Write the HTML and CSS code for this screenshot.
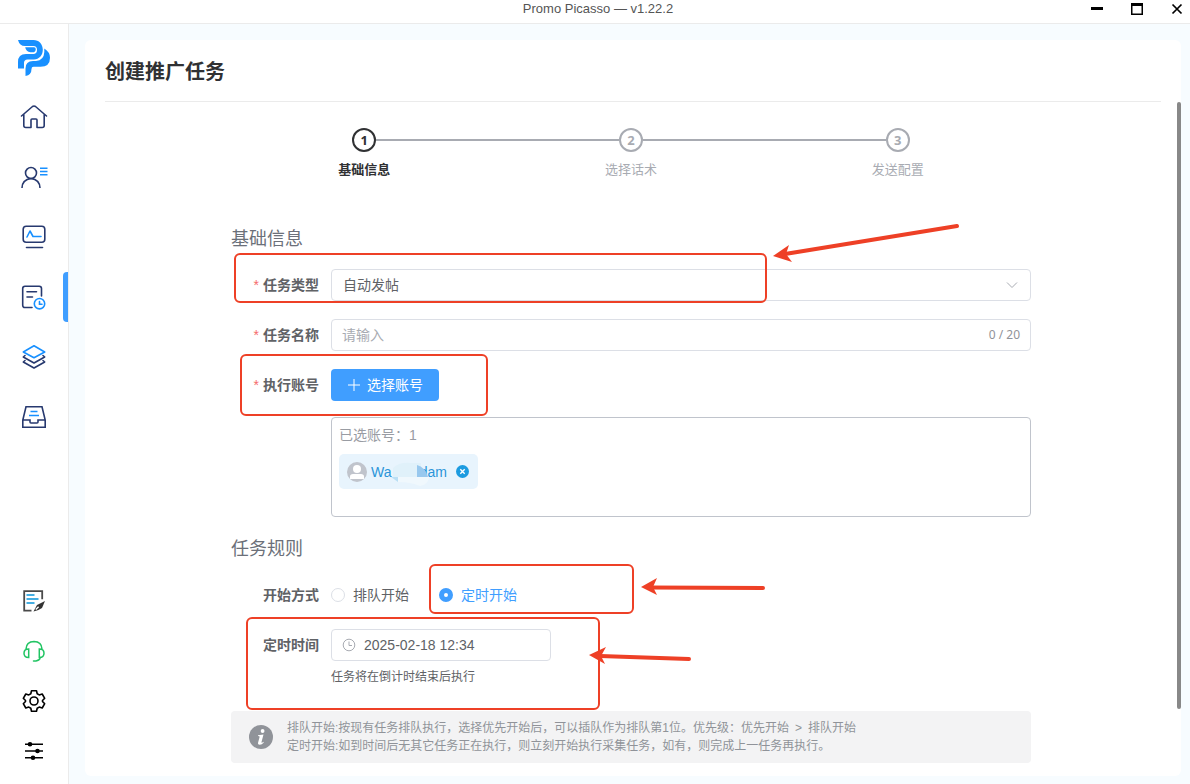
FILE: index.html
```html
<!DOCTYPE html>
<html lang="zh-CN">
<head>
<meta charset="utf-8">
<title>Promo Picasso — v1.22.2</title>
<link rel="stylesheet" href="styles.css">
</head>
<body>
<header class="titlebar">
  <span class="titlebar-text">Promo Picasso — v1.22.2</span>
  <div class="window-controls">
    <button type="button" aria-label="最小化"><svg width="12" height="12" viewBox="0 0 12 12"><path d="M0 5.5h12" stroke="#000" stroke-width="3"/></svg></button>
    <button type="button" aria-label="最大化"><svg width="12" height="12" viewBox="0 0 12 12"><path d="M.7 0v12M11.3 0v12M0 11.3h12" stroke="#000" stroke-width="1.6"/><path d="M0 1.5h12" stroke="#000" stroke-width="3"/></svg></button>
    <button type="button" aria-label="关闭"><svg width="12" height="12" viewBox="0 0 12 12"><path d="M1.5 1.5l9 9M10.5 1.5l-9 9" stroke="#000" stroke-width="1.7"/></svg></button>
  </div>
</header>
<div class="shell">
  <nav class="sidebar">
    <svg class="logo" width="32" height="36" viewBox="0 0 32 36" fill="#1890ff"><path d="M0 0h15.500C21 0 24.800 4.200 24.800 9.800S21 19.500 16 19.500H9.500Q6 19.500 6 23v5.500H0V22q0-8 8-8h8q3-.500 3-4.200T15.500 6H7Q1.500 6 0 0z"/><path d="M7.200 7.300H16q1.800 0 1.800 2T16 12.200h-3.500Q8 12 7.200 7.300zM26.300 8.500q5.700 3.500 5.700 9.300 0 9-9.500 9H15.500q-2 0-2 2.200 0 6-6 7V28.500Q7.500 21 15 21h3q8-.800 8.300-9z"/></svg>
    <a class="nav-item" href="#" aria-label="首页"><svg width="28" height="28" viewBox="0 0 28 28" fill="none" stroke="#27396f" stroke-width="1.600" stroke-linejoin="round" stroke-linecap="round"><path d="M1.500 13L12.500 3.500q1.500-1 3 0L26.500 13M3.800 11.500v11q0 2 2 2H11v-7.500q0-1 1-1h4q1 0 1 1v7.500h5.200q2 0 2-2v-11"/></svg></a>
    <a class="nav-item" href="#" aria-label="账号"><svg width="28" height="28" viewBox="0 0 28 28" fill="none" stroke="#27396f" stroke-width="1.600"><circle cx="11" cy="10" r="5.500"/><path d="M2 25q.3-8.500 9-9.500 8.700 1 9 9.500"/><path d="M20 5.300h7.500M20 8.500h7.500M20 11.700h7.500" stroke="#1890ff" stroke-width="1.400"/></svg></a>
    <a class="nav-item" href="#" aria-label="监控"><svg width="28" height="28" viewBox="0 0 28 28" fill="none" stroke="#27396f" stroke-width="1.600" stroke-linecap="round" stroke-linejoin="round"><rect x="3.200" y="3.200" width="21.600" height="16" rx="3"/><path d="M6.500 24.500h16"/><path d="M7 14l3-6 3 5.500h8" stroke="#1890ff"/></svg></a>
    <a class="nav-item nav-item--active" href="#" aria-label="任务"><svg width="28" height="28" viewBox="0 0 28 28" fill="none" stroke="#27396f" stroke-width="1.600" stroke-linecap="round"><path d="M12 24.500H5q-2.300 0-2.300-2.300V5.500Q2.700 3.200 5 3.200h14.200q2.300 0 2.300 2.300V13M7 8.700h9.500M7 14h5.500"/><circle cx="19.500" cy="20.700" r="5.200" stroke="#1890ff"/><path d="M19.500 18.500v2.700H22" stroke="#1890ff"/></svg></a>
    <a class="nav-item" href="#" aria-label="素材"><svg width="28" height="28" viewBox="0 0 28 28" fill="none" stroke="#27396f" stroke-width="1.600" stroke-linejoin="round" stroke-linecap="round"><path d="M5 12.500l-1.700 1.500L14 20l10.700-6-1.700-1.500M5 17.500L3.300 19 14 25l10.700-6-1.700-1.500"/><path d="M14 2.800L24.700 9 14 14.800 3.300 9z" stroke="#1890ff"/></svg></a>
    <a class="nav-item" href="#" aria-label="收件箱"><svg width="28" height="28" viewBox="0 0 28 28" fill="none" stroke="#27396f" stroke-width="1.600"><path d="M6 3.700h16L25.200 17v7.300H2.800V17zM2.800 17H10v2q0 1 1 1h6q1 0 1-1v-2h7.200"/><path d="M10.500 8.500h7M9 12.500h10" stroke="#1890ff"/></svg></a>
    <div class="nav-tools">
      <a class="tool-item" href="#" aria-label="日志"><svg width="24" height="24" viewBox="0 0 24 24" fill="none"><path d="M9.500 21.600H2.200V2.200h18v8" stroke="#4a4a4a" stroke-width="1.800"/><path d="M4.500 6h8M4.500 10h12M4.500 14h8" stroke="#45aee2" stroke-width="1.800"/><path d="M11.500 22.500l3.500-6.500 8-4-3 7q-3 2-8.500 3.500z" fill="#333"/><path d="M13.800 20.500l2.800-2.800" stroke="#fff" stroke-width="1.500"/></svg></a>
      <a class="tool-item" href="#" aria-label="客服"><svg width="24" height="24" viewBox="0 0 24 24" fill="none" stroke="#21c463" stroke-width="1.500" stroke-linecap="round"><path d="M4 10q.3-7.300 8-7.500 7.700.200 8 7.500M6.700 10v8.500Q2 18.500 2 14.200 2 10 6.700 10zM17.300 10v8.500q4.700 0 4.700-4.300 0-4.200-4.700-4.200zM18.500 18.500q-1 3-4.500 3.500h-2.500"/></svg></a>
      <a class="tool-item" href="#" aria-label="设置"><svg width="24" height="24" viewBox="0 0 24 24" fill="none" stroke="#000" stroke-width="1.600" stroke-linejoin="round"><path d="M9.500 1.800h5l.7 3 2 1.100 3-.900 2.500 4.300L20.500 11.500v1l2.200 2.200-2.500 4.300-3-.900-2 1.100-.7 3h-5l-.7-3-2-1.100-3 .900-2.500-4.300 2.200-2.200v-1L1.300 9.300 3.800 5l3 .900 2-1.100z"/><circle cx="12" cy="12" r="4"/></svg></a>
      <a class="tool-item" href="#" aria-label="偏好"><svg width="24" height="24" viewBox="0 0 24 24" stroke="#000" stroke-width="1.600"><path d="M3 5.200h18M3 12h18M3 18.800h18"/><circle cx="8" cy="5.200" r="1.500"/><circle cx="15.500" cy="12" r="1.500"/><circle cx="11" cy="18.800" r="1.500"/></svg></a>
    </div>
  </nav>
  <main class="main">
    <section class="card">
      <h1 class="card-title">创建推广任务</h1>
      <div class="scroll-area">
        <div class="content">
          <ol class="steps">
            <li class="step step--active"><span class="step-num">1</span><span class="step-label">基础信息</span></li>
            <li class="step"><span class="step-num">2</span><span class="step-label">选择话术</span></li>
            <li class="step"><span class="step-num">3</span><span class="step-label">发送配置</span></li>
          </ol>
          <form class="form">
            <h2 class="section-title">基础信息</h2>
            <div class="row">
              <label class="label label--required" for="type">任务类型</label>
              <div class="select-wrap">
                <select class="field" id="type"><option>自动发帖</option></select>
                <svg class="chevron" width="12" height="12" viewBox="0 0 12 12" fill="none" stroke="#a8abb2"><path d="M1 3.500l5 5 5-5"/></svg>
              </div>
            </div>
            <div class="row">
              <label class="label label--required" for="name">任务名称</label>
              <div class="field input-box"><input class="input" id="name" type="text" maxlength="20" placeholder="请输入"><span class="counter">0 / 20</span></div>
            </div>
            <div class="row">
              <label class="label label--required" for="pick">执行账号</label>
              <button class="primary" id="pick" type="button"><svg width="14" height="14" viewBox="0 0 14 14" stroke="#fff"><path d="M1 7h12M7 1v12"/></svg>选择账号</button>
            </div>
            <div class="accounts">
              <div class="accounts-count">已选账号：1</div>
              <div class="tag">
                <svg width="20" height="20" viewBox="0 0 20 20"><circle cx="10" cy="10" r="10" fill="#c0c4cc"/><circle cx="10" cy="7" r="4" fill="#fff"/><path d="M3 17v-2.500Q3 12 6 12h8q3 0 3 2.500V17z" fill="#fff"/></svg>
                <span class="tag-name"><span>Wa</span><span>dam</span><svg class="smudge" width="46" height="26" viewBox="0 0 46 26"><path d="M2 6Q8 0 20 1h10v14H2z" fill="#e0f1fa"/><path d="M26 3q8 2 11 12H26z" fill="#98c8ee"/><path d="M0 15h7v5z" fill="#b9dff5"/><path d="M7 15h31q-1 8-9 9-9-4-22-4z" fill="#f0f8fd"/></svg></span>
                <button class="tag-close" type="button" aria-label="移除"><svg width="13" height="13" viewBox="0 0 13 13"><circle cx="6.500" cy="6.500" r="6.500" fill="#1c9be0"/><path d="M4.300 4.300l4.400 4.400M8.700 4.300L4.300 8.700" stroke="#fff" stroke-width="1.400"/></svg></button>
              </div>
            </div>
            <h2 class="section-title section-title--rules">任务规则</h2>
            <div class="row" role="radiogroup" aria-labelledby="mode">
              <span class="label" id="mode">开始方式</span>
              <label class="radio"><input type="radio" name="mode">排队开始</label>
              <label class="radio"><input type="radio" name="mode" checked>定时开始</label>
            </div>
            <div class="row">
              <label class="label" for="time">定时时间</label>
              <div class="field input-box input-box--date"><svg width="14" height="14" viewBox="0 0 14 14" fill="none" stroke="#a8abb2"><circle cx="7" cy="7" r="5.800"/><path d="M7 3.500V7.500h3"/></svg><input class="input" id="time" type="text" value="2025-02-18 12:34"></div>
            </div>
            <p class="hint">任务将在倒计时结束后执行</p>
            <div class="notice">
              <svg width="24" height="24" viewBox="0 0 24 24"><circle cx="12" cy="12" r="12" fill="#909399"/><circle cx="13.600" cy="6" r="1.900" fill="#fff"/><path d="M9 10.200l5.500-.700-2 7.500q-.2 1 .600.700l1.200-.900.500.600q-2 2.300-4 2.300-2.200 0-1.700-2.200l1.500-5.500q.3-1-1.600-1z" fill="#fff"/></svg>
              <p>排队开始:按现有任务排队执行，选择优先开始后，可以插队作为排队第1位。优先级：优先开始&ensp;&gt;&ensp;排队开始<br>定时开始:如到时间后无其它任务正在执行，则立刻开始执行采集任务，如有，则完成上一任务再执行。</p>
            </div>
            <svg class="marks" width="800" height="545" viewBox="231 218 800 545" fill="none" stroke="#ee4026" stroke-width="2" aria-hidden="true">
              <rect x="235" y="254" width="531" height="48" rx="5"/>
              <rect x="241" y="355" width="246" height="60" rx="5"/>
              <rect x="430" y="565" width="203" height="48" rx="5"/>
              <rect x="247" y="618" width="352" height="91" rx="5"/>
              <g stroke-width="4" stroke-linecap="round"><path d="M785 254L957 226M650 587.500L763 588M600 656L689 659"/></g>
              <g fill="#ee4026" stroke="none"><path d="M773 256l16-11-3 9 6 8zM641 587l16-9-4 9 4 8zM589 655l17-8-5 9 4 8z"/></g>
            </svg>
          </form>
        </div>
        <div class="scrollbar"><div class="thumb"></div></div>
      </div>
    </section>
  </main>
</div>
</body>
</html>
```
FILE: styles.css
```css
* { box-sizing: border-box; }
body {
  margin: 0;
  min-height: 100vh;
  display: flex;
  flex-direction: column;
  font: 14px/20px "Liberation Sans", "Noto Sans CJK SC", sans-serif;
  color: #606266;
  background: #fff;
}
h1, h2, p, ol { margin: 0; padding: 0; font-weight: normal; }
button, input, select { font: inherit; color: inherit; }
button { border: 0; padding: 0; background: none; cursor: pointer; }
svg { display: block; flex: none; }

.titlebar {
  height: 24px;
  display: grid;
  grid-template-columns: 1fr auto 1fr;
  align-items: center;
  padding: 0 7px 6px 13px;
  border-bottom: 1px solid #ebebeb;
}
.titlebar-text { grid-column: 2; font-size: 13px; line-height: 16px; color: #555; }
.window-controls { display: flex; justify-content: flex-end; gap: 28px; }

.shell { flex: 1; display: flex; }
.sidebar {
  width: 69px;
  display: flex;
  flex-direction: column;
  align-items: center;
  border-right: 1px solid #ebebeb;
  padding: 16px 0 8px;
}
.logo { margin-bottom: 16px; }
.nav-item, .tool-item {
  width: 100%;
  display: flex;
  align-items: center;
  justify-content: center;
}
.nav-item { height: 50px; margin-bottom: 10px; }
.nav-item--active { position: relative; }
.nav-item--active::after {
  content: "";
  position: absolute;
  right: 0;
  top: 0;
  width: 5px;
  height: 100%;
  border-radius: 4px 0 0 4px;
  background: #409eff;
}
.nav-tools { width: 100%; margin-top: auto; }
.tool-item { height: 50px; }

.main { flex: 1; display: flex; padding: 16px 9px 8px 16px; background: #f7fcff; }
.card { flex: 1; display: flex; flex-direction: column; background: #fff; border-radius: 6px; }
.card-title {
  margin: 0 20px;
  padding: 17px 0 14px;
  font-size: 20px;
  line-height: 30px;
  font-weight: bold;
  color: #303133;
  border-bottom: 1px solid #ebebeb;
}
.scroll-area { flex: 1; display: flex; }
.scrollbar { width: 4px; }
.thumb { height: 90%; border-radius: 2px; background: #888; }
.content { flex: 1; max-width: 840px; margin: 0 auto; padding: 26px 20px 12px; }

.steps { display: flex; list-style: none; height: 90px; }
.step {
  flex: 1;
  display: flex;
  flex-direction: column;
  align-items: center;
  gap: 8px;
  position: relative;
  font-size: 13px;
  color: #a8abb2;
}
.step-num {
  width: 24px;
  height: 24px;
  border: 2px solid;
  border-radius: 50%;
  font: bold 13px/20px "Noto Sans", sans-serif;
  text-align: center;
}
.step:not(:last-child)::after {
  content: "";
  position: absolute;
  top: 11px;
  left: calc(50% + 12px);
  width: calc(100% - 24px);
  height: 2px;
  background: #a8abb2;
}
.step--active { color: #303133; }
.step--active .step-label { font-weight: bold; }

.form { position: relative; display: flex; flex-direction: column; }
.section-title { font-size: 18px; line-height: 42px; margin-bottom: 9px; color: #6b7079; }
.section-title--rules { margin-top: 11px; }
.row { display: flex; align-items: center; min-height: 32px; margin-bottom: 18px; }
.label { width: 100px; padding-right: 12px; text-align: right; font-weight: bold; }
.label--required::before { content: "*"; color: #f56c6c; font-weight: normal; margin-right: 4px; }
.field {
  width: 100%;
  height: 32px;
  border: 1px solid #dcdfe6;
  border-radius: 4px;
  background: #fff;
}
.select-wrap { flex: 1; display: grid; align-items: center; }
.select-wrap > * { grid-area: 1 / 1; }
select.field { appearance: none; padding: 0 11px; }
.chevron { justify-self: end; margin-right: 13px; }
.input-box { flex: 1; display: flex; align-items: center; gap: 8px; padding: 0 10px; }
.input-box--date { flex: none; width: 220px; }
.input { flex: 1; min-width: 0; padding: 0; border: 0; outline: 0; background: none; }
.input::placeholder { color: #a8abb2; }
.counter { font-family: "Noto Sans", sans-serif; font-size: 12px; color: #909399; }
.primary {
  height: 32px;
  padding: 0 16px;
  display: flex;
  align-items: center;
  gap: 6px;
  border-radius: 4px;
  background: #409eff;
  color: #fff;
}
.accounts {
  margin: -2px 0 0 100px;
  min-height: 100px;
  padding: 7px;
  border: 1px solid #c0c4cc;
  border-radius: 4px;
}
.accounts-count { color: #999ca3; }
.tag {
  width: max-content;
  height: 35px;
  margin-top: 9px;
  padding: 0 9px 0 8px;
  display: flex;
  align-items: center;
  gap: 4px;
  border-radius: 5px;
  background: #e8f4fd;
  color: #2b95d9;
}
.tag-name { width: 76px; display: flex; justify-content: space-between; position: relative; }
.smudge { position: absolute; left: 20px; top: 0; }
.tag-close { margin-left: 5px; }
.radio { display: flex; align-items: center; gap: 8px; margin-right: 30px; }
.radio input {
  appearance: none;
  width: 14px;
  height: 14px;
  margin: 0;
  border: 1px solid #dcdfe6;
  border-radius: 50%;
}
.radio input:checked { border: 5px solid #409eff; }
.radio:has(input:checked) { color: #409eff; }
.hint { margin: -12px 0 24px 100px; font-size: 12px; }
.notice {
  display: flex;
  align-items: center;
  gap: 14px;
  min-height: 52px;
  padding: 8px 18px;
  border-radius: 4px;
  background: #f3f3f4;
  font-size: 12px;
  line-height: 18px;
  color: #909399;
}
.marks { position: absolute; left: 0; top: 0; overflow: visible; pointer-events: none; }
```
